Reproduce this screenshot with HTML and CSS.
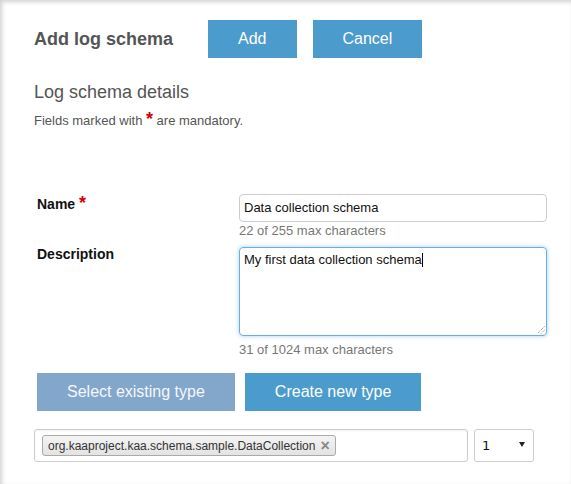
FILE: index.html
```html
<!DOCTYPE html>
<html lang="en">
<head>
<meta charset="utf-8">
<title>Add log schema</title>
<link rel="stylesheet" href="styles.css">
</head>
<body>
<div class="page">
  <div class="header">
    <h1 class="title">Add log schema</h1>
    <button class="btn">Add</button>
    <button class="btn">Cancel</button>
  </div>
  <h2 class="section-title">Log schema details</h2>
  <p class="note">Fields marked with <span class="req">*</span> are mandatory.</p>

  <div class="form">
    <div class="label">Name <span class="req">*</span></div>
    <div class="field">
      <div class="input">Data collection schema</div>
      <div class="hint">22 of 255 max characters</div>
    </div>
    <div class="label label-raised">Description</div>
    <div class="field">
      <div class="textarea">My first data collection schema<span class="caret"></span>
        <svg class="grip" width="8" height="8" viewBox="0 0 8 8"><path d="M7.5 0.5 L0.5 7.5 M7.5 4 L4 7.5" stroke="#777" stroke-width="1" stroke-dasharray="1 1" fill="none"/></svg>
      </div>
      <div class="hint hint-spaced">31 of 1024 max characters</div>
    </div>
  </div>

  <div class="types">
    <button class="btn btn-muted">Select existing type</button>
    <button class="btn">Create new type</button>
  </div>

  <div class="type-row">
    <div class="tag-input">
      <span class="chip">org.kaaproject.kaa.schema.sample.DataCollection<span class="chip-x">×</span></span>
    </div>
    <div class="select"><span class="select-value">1</span><span class="select-arrow"></span></div>
  </div>
</div>
</body>
</html>
```

FILE: styles.css
```css
html, body {
  margin: 0;
  height: 100%;
}

body {
  font-family: "Liberation Sans", Arial, sans-serif;
  background: #fff;
  color: #333;
}

.page {
  box-sizing: border-box;
  min-height: 100%;
  padding: 20px 0 0 34px;
  box-shadow: inset 2px 2px 4px rgba(0, 0, 0, 0.18);
}

.header {
  display: flex;
  align-items: center;
  height: 38px;
}

.title {
  margin: 0 35px 0 0;
  font-size: 18px;
  font-weight: bold;
  line-height: 22px;
  color: #555;
}

.btn {
  height: 38px;
  padding: 0 30px;
  border: 0;
  border-radius: 0;
  background: #4b9bcc;
  color: #fff;
  font: 16px "Liberation Sans", Arial, sans-serif;
}

.header .btn + .btn {
  margin-left: 16px;
}

.btn-muted {
  background: #83a6cb;
  color: #f4f7fb;
}

.section-title {
  margin: 23px 0 0;
  font-size: 18px;
  font-weight: normal;
  line-height: 22px;
  color: #555;
}

.note {
  margin: 10px 0 0;
  font-size: 13px;
  line-height: 16px;
  color: #555;
}

.req {
  color: #d40000;
  font-weight: bold;
  font-size: 18px;
  line-height: 0;
}

.form {
  display: grid;
  grid-template-columns: 202px 308px;
  row-gap: 8px;
  margin: 65px 0 0 3px;
}

.label {
  font-size: 14px;
  font-weight: bold;
  line-height: 20px;
  color: #111;
}

.label-raised {
  margin-top: -3px;
}

.input {
  box-sizing: border-box;
  height: 28px;
  padding: 0 4px;
  border: 1px solid #ccc;
  border-radius: 4px;
  font-size: 13px;
  line-height: 26px;
  color: #111;
}

.hint {
  margin-top: 1px;
  font-size: 13px;
  line-height: 16px;
  color: #777;
}

.hint-spaced {
  margin-top: 6px;
}

.textarea {
  position: relative;
  box-sizing: border-box;
  height: 89px;
  padding: 4px;
  border: 1px solid #66afe9;
  border-radius: 4px;
  font-size: 13px;
  line-height: 16px;
  color: #111;
  box-shadow: 0 0 4px rgba(102, 175, 233, 0.6);
}

.caret {
  display: inline-block;
  width: 1px;
  height: 14px;
  background: #000;
  vertical-align: -3px;
}

.grip {
  position: absolute;
  right: 1px;
  bottom: 1px;
}

.types {
  display: flex;
  gap: 10px;
  margin: 15px 0 0 3px;
}

.type-row {
  display: flex;
  gap: 6px;
  margin-top: 18px;
}

.tag-input {
  box-sizing: border-box;
  width: 434px;
  height: 33px;
  padding: 5px 0 0 7px;
  border: 1px solid #ccc;
  border-radius: 3px;
  box-shadow: inset 0 1px 2px rgba(0, 0, 0, 0.06);
}

.chip {
  display: inline-flex;
  align-items: center;
  gap: 5px;
  box-sizing: border-box;
  height: 21px;
  padding: 0 5px;
  border: 1px solid #aaa;
  border-radius: 3px;
  background: linear-gradient(#f4f4f4, #e3e3e3);
  font-size: 12px;
  color: #333;
}

.chip-x {
  font-size: 16px;
  font-weight: bold;
  line-height: 1;
  color: #888;
}

.select {
  display: flex;
  justify-content: space-between;
  align-items: flex-start;
  box-sizing: border-box;
  width: 60px;
  height: 33px;
  padding: 8px 8px 0 7px;
  border: 1px solid #ccc;
  border-radius: 3px;
  font: 13px/16px "DejaVu Sans", sans-serif;
  color: #111;
}

.select-arrow {
  margin-top: 4px;
  width: 0;
  height: 0;
  border-left: 3px solid transparent;
  border-right: 3px solid transparent;
  border-top: 5px solid #222;
}
```
